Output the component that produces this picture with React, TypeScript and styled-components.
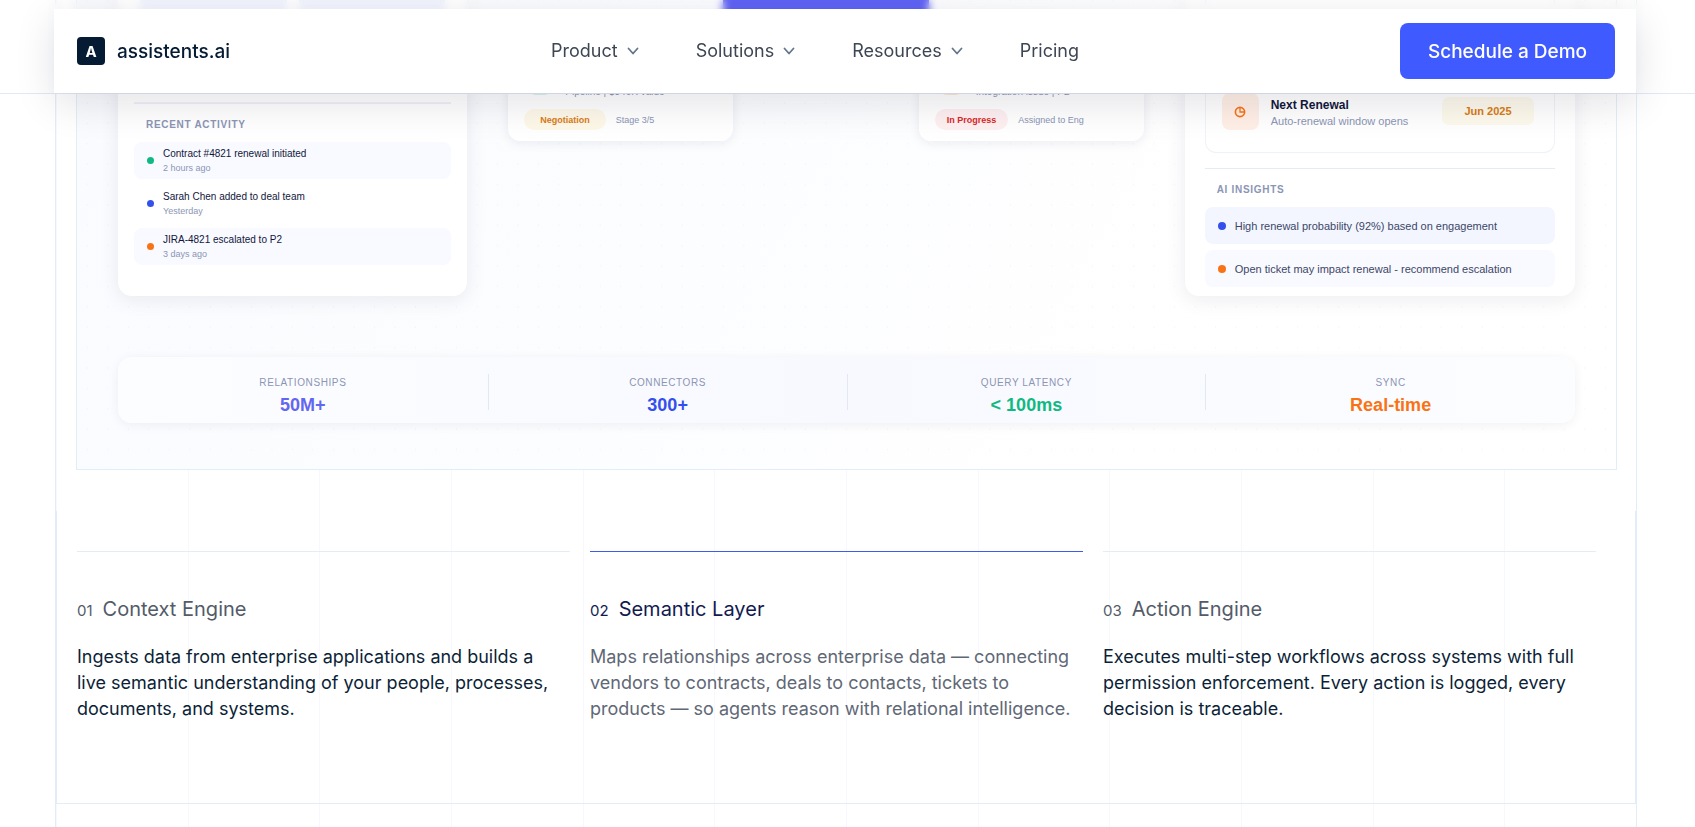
import React from "react";
import styled, { createGlobalStyle } from "styled-components";

const GlobalStyle = createGlobalStyle`
  *, *::before, *::after { box-sizing: border-box; }
  body { margin: 0; background: #fff; font-family: Inter, "Liberation Sans", sans-serif; color: #0c1f38; overflow: hidden; }
  h2, h3, p, ul, ol, dl, dd, dt { margin: 0; padding: 0; }
  ul, ol { list-style: none; }
`;

const Header = styled.header`
  position: fixed;
  top: 0;
  left: 0;
  right: 0;
  z-index: 10;
  padding: 9px 59px 0 54px;
  border-bottom: 1px solid #e2e8f5;
  backdrop-filter: blur(4px);
`;

const NavBar = styled.div`
  height: 84px;
  padding: 0 21px 0 23px;
  display: flex;
  justify-content: space-between;
  align-items: center;
  background: #fff;
  box-shadow: 0 10px 40px rgba(15, 15, 40, 0.12);
`;

const Brand = styled.a`
  display: flex;
  align-items: center;
  gap: 12px;
  color: #051a33;
  font-size: 19px;
  font-weight: 500;
  text-decoration: none;
`;

const BrandMark = styled.span`
  display: grid;
  place-items: center;
  width: 28px;
  height: 28px;
  border-radius: 4px;
  background: #051a33;
  color: #fff;
  font-size: 15px;
  font-weight: 700;
`;

const NavLinks = styled.nav`
  display: flex;
  align-items: center;
  gap: 57px;
`;

const navText = `
  font-family: Inter, sans-serif;
  font-size: 18px;
  line-height: 24px;
  color: #3d4654;
`;

const NavButton = styled.button`
  ${navText}
  display: flex;
  align-items: center;
  gap: 9px;
  padding: 0;
  border: 0;
  background: none;
`;

const NavLink = styled.a`
  ${navText}
  text-decoration: none;
`;

const DemoButton = styled.button`
  width: 215px;
  height: 56px;
  border: 0;
  border-radius: 8px;
  background: #3f5bff;
  color: #fff;
  font-family: Inter, sans-serif;
  font-size: 19px;
  font-weight: 500;
`;

const Rail = styled.main`
  margin: 0 58px 0 55px;
  min-height: 100vh;
  border: solid #e3edf7;
  border-width: 0 1px;
  background: repeating-linear-gradient(to right, #f7f8fe 0, #f7f8fe 1px, transparent 1px, transparent calc(100% / 12));
`;

const Panel = styled.section`
  margin: 0 19px 0 20px;
  padding: 0 41px 46px;
  border: 1px solid #e3edf7;
  border-top: 0;
  background:
    radial-gradient(circle at 50% 1px, rgba(100, 110, 150, 0.05) 1px, transparent 1px) left bottom / calc(100% / 75) calc(100% / 23),
    linear-gradient(120deg, #fafbfe 0%, #fcfdff 40%, #ffffff 75%);
`;

const Board = styled.div`
  display: grid;
  grid-template-columns: 349fr 635fr 390fr;
  gap: 41px;
`;

const Card = styled.article<{ $pad: number }>`
  height: 296px;
  padding: 0 ${(p) => p.$pad}px;
  border-radius: 0 0 14px 14px;
  background: #fff;
  box-shadow: 0 4px 20px rgba(20, 25, 60, 0.08);
`;

const Tiles = styled.div`
  display: grid;
  grid-template-columns: 1fr 1fr;
  gap: 12px;
  height: 102px;
  padding: 0 6px 62px;
`;

const Tile = styled.span`
  background: #f2f5fe;
`;

const Divider = styled.hr<{ $thick?: boolean }>`
  height: ${(p) => (p.$thick ? 2 : 1)}px;
  margin: 0;
  border: 0;
  background: ${(p) => (p.$thick ? "#eef0f7" : "#e3ebf5")};
`;

const Caption = styled.h3`
  padding: 15px 12px 11px;
  font: bold 10px/12px "Liberation Sans", Arial, sans-serif;
  letter-spacing: 0.07em;
  color: #8b95b5;
`;

const Rows = styled.ul`
  display: flex;
  flex-direction: column;
  gap: 6px;
`;

const Row = styled.li<{ $tone?: string }>`
  display: flex;
  align-items: center;
  gap: 9px;
  height: 37px;
  padding: 0 13px;
  border-radius: 8px;
  background: ${(p) => p.$tone ?? "transparent"};
  font: 11px/14px "Liberation Sans", Arial, sans-serif;
  color: #3c4668;
`;

const Dot = styled.span<{ $color: string; $size: number }>`
  width: ${(p) => p.$size}px;
  height: ${(p) => p.$size}px;
  flex: none;
  border-radius: 50%;
  background: ${(p) => p.$color};
`;

const Activity = styled.span`
  display: flex;
  flex-direction: column;
  font-size: 10px;
  color: #11173c;
`;

const Muted = styled.span<{ $size?: number }>`
  font-size: ${(p) => p.$size ?? 9}px;
  color: #8b95b5;
`;

const Middle = styled.div`
  display: flex;
  flex-direction: column;
  align-items: center;
`;

const Core = styled.div`
  width: 206px;
  height: 24px;
  background: #6063f4;
`;

const NodeRow = styled.div`
  width: 100%;
  display: flex;
  justify-content: space-between;
  padding-top: 38px;
`;

const NodeCard = styled.article`
  width: 225px;
  height: 79px;
  padding: 22px 16px 0;
  border-radius: 12px;
  background: #fff;
  box-shadow: 0 2px 12px rgba(20, 25, 60, 0.08);
  font: 9px/12px "Liberation Sans", Arial, sans-serif;
`;

const NodeHead = styled.div`
  display: flex;
  align-items: flex-end;
  gap: 13px;
  height: 14px;
  padding-left: 4px;
`;

const NodeIcon = styled.span<{ $color: string }>`
  width: 24px;
  height: 12px;
  margin-bottom: 3px;
  border-radius: 0 0 8px 8px;
  background: ${(p) => p.$color};
`;

const NodeFoot = styled.div`
  display: flex;
  align-items: center;
  gap: 10px;
  padding-top: 11px;
`;

const Pill = styled.span<{ $bg: string; $fg: string; $pad: number }>`
  padding: 5px ${(p) => p.$pad}px 4px;
  border-radius: 11px;
  background: ${(p) => p.$bg};
  color: ${(p) => p.$fg};
  font-weight: bold;
`;

const Timeline = styled.div`
  height: 153px;
  padding: 93px 20px 0 16px;
  border: 1px solid #eef2f9;
  border-top: 0;
  border-radius: 0 0 11px 11px;
  display: flex;
  align-items: flex-start;
  gap: 12px;
  margin-bottom: 15px;
`;

const RenewalIcon = styled.span`
  display: grid;
  place-items: center;
  width: 37px;
  height: 37px;
  flex: none;
  border-radius: 8px;
  background: #ffefe6;
`;

const Renewal = styled.div`
  flex: 1;
  display: flex;
  flex-direction: column;
  padding-top: 4px;
  font: bold 12px/16px "Liberation Sans", Arial, sans-serif;
  color: #11173c;
`;

const RenewalSub = styled(Muted)`
  font-weight: normal;
`;

const DateTag = styled.span`
  width: 92px;
  margin-top: 4px;
  border-radius: 7px;
  background: #fdf9ec;
  color: #d97b14;
  text-align: center;
  font: bold 11px/28px "Liberation Sans", Arial, sans-serif;
`;

const Stats = styled.dl`
  display: grid;
  grid-template-columns: 370fr 359fr 359fr 370fr;
  height: 66px;
  margin-top: 61px;
  padding: 17px 0 0;
  border-radius: 14px;
  background: linear-gradient(90deg, #fcfdff, #f8f9ff 50%, #fcfdff);
  box-shadow: 0 2px 12px rgba(20, 25, 60, 0.06);
  font-family: "Liberation Sans", Arial, sans-serif;
  text-align: center;
`;

const Stat = styled.div`
  height: 36px;
  & + & { border-left: 1px solid #e3e9f3; }
`;

const StatLabel = styled.dt`
  font-size: 10px;
  line-height: 18px;
  letter-spacing: 0.06em;
  color: #8b95b5;
`;

const StatValue = styled.dd<{ $color: string }>`
  padding-top: 3px;
  font-size: 18px;
  line-height: 20px;
  font-weight: bold;
  color: ${(p) => p.$color};
`;

const Engines = styled.section`
  margin-top: 41px;
  height: 293px;
  padding: 40px 39px 0 20px;
  border: 1px solid #e3edf7;
  border-top: 0;
`;

const EngineList = styled.ol`
  display: grid;
  grid-template-columns: repeat(3, 1fr);
  gap: 20px;
`;

const Engine = styled.li<{ $active?: boolean }>`
  padding-top: 44px;
  border-top: 1px solid ${(p) => (p.$active ? "#3f5bea" : "#e3edf7")};
  h2 { color: ${(p) => (p.$active ? "#131a52" : "#535b69")}; }
  p { color: ${(p) => (p.$active ? "#5f6876" : "#0c1f38")}; }
`;

const EngineTitle = styled.h2`
  display: flex;
  align-items: baseline;
  gap: 10px;
  font-size: 20px;
  font-weight: 400;
  line-height: 27px;
`;

const EngineNumber = styled.span`
  font-size: 15px;
`;

const EngineText = styled.p`
  padding: 20px 5px 0 0;
  font-size: 18px;
  line-height: 26px;
`;

const Chevron = () => (
  <svg width="12" height="8" viewBox="0 0 12 8" fill="none" stroke="#64748b" strokeWidth="1.8" strokeLinecap="round" strokeLinejoin="round" aria-hidden="true">
    <path d="M1.5 1.5 6 6.5l4.5-5" />
  </svg>
);

const Clock = () => (
  <svg width="12" height="12" viewBox="0 0 12 12" fill="none" stroke="#f97316" strokeWidth="1.7" aria-hidden="true">
    <circle cx="6" cy="6" r="4.6" />
    <path d="M6 1.5V6h4.5" strokeWidth="1.3" />
  </svg>
);

const menus = ["Product", "Solutions", "Resources"];

const activity = [
  { title: "Contract #4821 renewal initiated", when: "2 hours ago", color: "#10b981", tone: "#f9faff" },
  { title: "Sarah Chen added to deal team", when: "Yesterday", color: "#3350ee", tone: "transparent" },
  { title: "JIRA-4821 escalated to P2", when: "3 days ago", color: "#f97316", tone: "#f9faff" },
];

const insights = [
  { text: "High renewal probability (92%) based on engagement", color: "#3350ee", tone: "#f3f6ff" },
  { text: "Open ticket may impact renewal - recommend escalation", color: "#f97316", tone: "#f9faff" },
];

const stats = [
  { label: "RELATIONSHIPS", value: "50M+", color: "#6366f1" },
  { label: "CONNECTORS", value: "300+", color: "#3350ee" },
  { label: "QUERY LATENCY", value: "< 100ms", color: "#10b981" },
  { label: "SYNC", value: "Real-time", color: "#f97316" },
];

const engines = [
  { title: "Context Engine", text: "Ingests data from enterprise applications and builds a live semantic understanding of your people, processes, documents, and systems." },
  { title: "Semantic Layer", active: true, text: "Maps relationships across enterprise data — connecting vendors to contracts, deals to contacts, tickets to products — so agents reason with relational intelligence." },
  { title: "Action Engine", text: "Executes multi-step workflows across systems with full permission enforcement. Every action is logged, every decision is traceable." },
];

export default function App() {
  return (
    <>
      <GlobalStyle />
      <Header>
        <NavBar>
          <Brand href="#">
            <BrandMark>A</BrandMark>
            assistents.ai
          </Brand>
          <NavLinks>
            {menus.map((m) => (
              <NavButton key={m} type="button">
                {m}
                <Chevron />
              </NavButton>
            ))}
            <NavLink href="#pricing">Pricing</NavLink>
          </NavLinks>
          <DemoButton type="button">Schedule a Demo</DemoButton>
        </NavBar>
      </Header>

      <Rail>
        <Panel>
          <Board>
            <Card $pad={16}>
              <Tiles>
                <Tile />
                <Tile />
              </Tiles>
              <Divider $thick />
              <Caption>RECENT ACTIVITY</Caption>
              <Rows>
                {activity.map((a) => (
                  <Row key={a.title} $tone={a.tone}>
                    <Dot $color={a.color} $size={7} />
                    <Activity>
                      {a.title}
                      <Muted>{a.when}</Muted>
                    </Activity>
                  </Row>
                ))}
              </Rows>
            </Card>

            <Middle>
              <Core />
              <NodeRow>
                <NodeCard>
                  <NodeHead>
                    <NodeIcon $color="#d5f3e8" />
                    <Muted $size={10}>Pipeline | $340K value</Muted>
                  </NodeHead>
                  <NodeFoot>
                    <Pill $bg="#fdf8e8" $fg="#d97b14" $pad={16}>Negotiation</Pill>
                    <Muted>Stage 3/5</Muted>
                  </NodeFoot>
                </NodeCard>
                <NodeCard>
                  <NodeHead>
                    <NodeIcon $color="#fde6d8" />
                    <Muted $size={10}>Integration issue | P2</Muted>
                  </NodeHead>
                  <NodeFoot>
                    <Pill $bg="#fef0f1" $fg="#dc2626" $pad={12}>In Progress</Pill>
                    <Muted>Assigned to Eng</Muted>
                  </NodeFoot>
                </NodeCard>
              </NodeRow>
            </Middle>

            <Card $pad={20}>
              <Timeline>
                <RenewalIcon>
                  <Clock />
                </RenewalIcon>
                <Renewal>
                  Next Renewal
                  <RenewalSub $size={11}>Auto-renewal window opens</RenewalSub>
                </Renewal>
                <DateTag>Jun 2025</DateTag>
              </Timeline>
              <Divider />
              <Caption>AI INSIGHTS</Caption>
              <Rows>
                {insights.map((i) => (
                  <Row key={i.text} $tone={i.tone}>
                    <Dot $color={i.color} $size={8} />
                    {i.text}
                  </Row>
                ))}
              </Rows>
            </Card>
          </Board>

          <Stats>
            {stats.map((s) => (
              <Stat key={s.label}>
                <StatLabel>{s.label}</StatLabel>
                <StatValue $color={s.color}>{s.value}</StatValue>
              </Stat>
            ))}
          </Stats>
        </Panel>

        <Engines>
          <EngineList>
            {engines.map((e, i) => (
              <Engine key={e.title} $active={e.active}>
                <EngineTitle>
                  <EngineNumber>0{i + 1}</EngineNumber>
                  {e.title}
                </EngineTitle>
                <EngineText>{e.text}</EngineText>
              </Engine>
            ))}
          </EngineList>
        </Engines>
      </Rail>
    </>
  );
}
